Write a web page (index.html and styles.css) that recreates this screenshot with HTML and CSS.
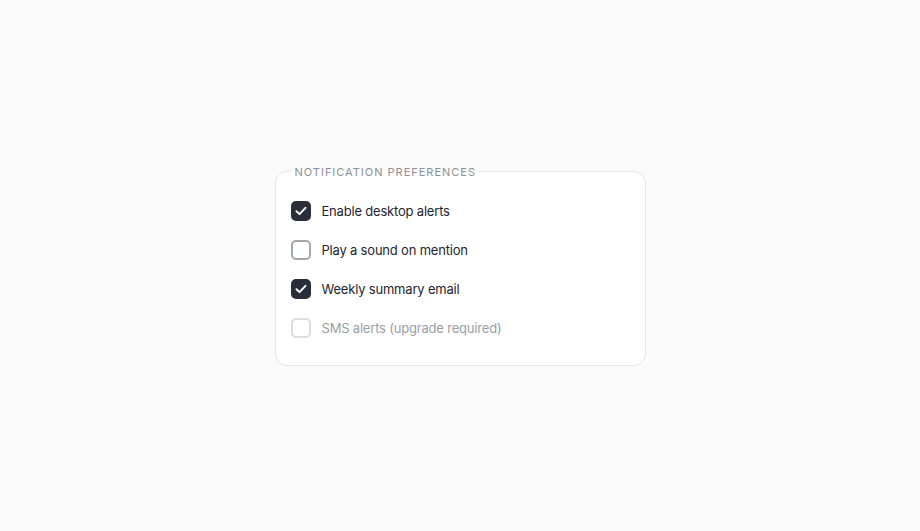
FILE: index.html
```html
<!DOCTYPE html>
<html>
<head>
    <link rel="stylesheet" href="styles.css">
</head>
<body>

<div class="page">
    <fieldset class="prefs">
        <legend>Notification preferences</legend>

        <label class="option">
            <input type="checkbox" checked>
            <span class="box"><svg viewBox="0 0 20 20"><path d="M5.5 10.2l3 2.9 6-6.2"/></svg></span>
            <span class="text">Enable desktop alerts</span>
        </label>

        <label class="option">
            <input type="checkbox">
            <span class="box"><svg viewBox="0 0 20 20"><path d="M5.5 10.2l3 2.9 6-6.2"/></svg></span>
            <span class="text">Play a sound on mention</span>
        </label>

        <label class="option">
            <input type="checkbox" checked>
            <span class="box"><svg viewBox="0 0 20 20"><path d="M5.5 10.2l3 2.9 6-6.2"/></svg></span>
            <span class="text">Weekly summary email</span>
        </label>

        <label class="option disabled">
            <input type="checkbox" disabled>
            <span class="box"><svg viewBox="0 0 20 20"><path d="M5.5 10.2l3 2.9 6-6.2"/></svg></span>
            <span class="text">SMS alerts (upgrade required)</span>
        </label>
    </fieldset>
</div>

</body>
</html>
```

FILE: styles.css
```css
body {
    margin: 0;
    padding: 0;
    background: #fafafa;
    font-family: Inter, "Liberation Sans", sans-serif;
    color: #1f2430;
}
.page {
    height: 531px;
    display: flex;
    align-items: center;
    justify-content: center;
}
.prefs {
    box-sizing: border-box;
    width: 371px;
    margin: 0;
    padding: 12px 15px 17px;
    background: #fff;
    border: 1px solid #e4e5e8;
    border-radius: 12px;
    display: flex;
    flex-direction: column;
    transform: translateY(-1px);
}
legend {
    padding: 0 2px 0 4px;
    font-size: 11px;
    letter-spacing: 0.09em;
    text-transform: uppercase;
    color: #8b8f97;
    line-height: 16px;
}
.option {
    display: flex;
    align-items: center;
    gap: 11px;
    height: 39px;
    font-size: 13px;
    letter-spacing: -0.015em;
    cursor: pointer;
}
.option input {
    position: absolute;
    opacity: 0;
    pointer-events: none;
}
.box {
    box-sizing: border-box;
    width: 20px;
    height: 20px;
    flex: none;
    border: 2px solid #a3a7ae;
    border-radius: 5px;
    background: #fff;
    display: flex;
}
.box svg {
    width: 20px;
    height: 20px;
    margin: -2px;
    fill: none;
    stroke: #fff;
    stroke-width: 2;
    stroke-linecap: round;
    stroke-linejoin: round;
    display: none;
}
.option input:checked + .box {
    background: #2a2e3a;
    border-color: #2a2e3a;
}
.option input:checked + .box svg {
    display: block;
}
.option.disabled {
    cursor: default;
}
.option.disabled .box {
    border-color: #dcdee2;
}
.option.disabled .text {
    color: #9a9ea6;
}
```
